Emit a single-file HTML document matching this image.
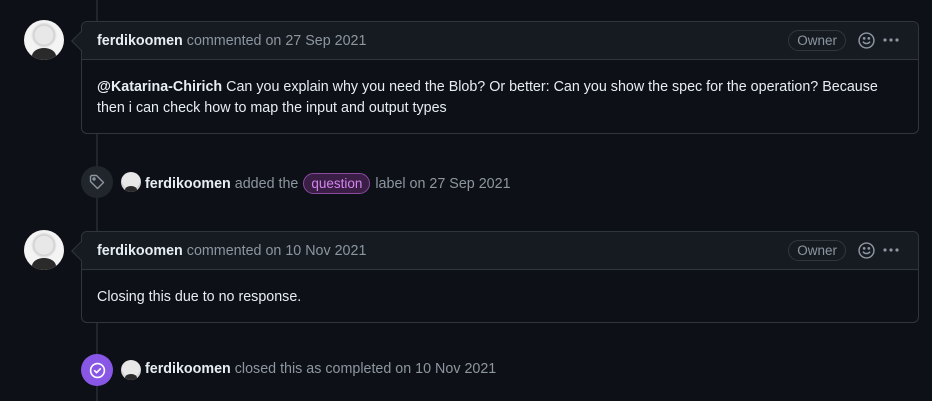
<!DOCTYPE html>
<html><head><style>
*{box-sizing:border-box;margin:0;padding:0}
body{width:932px;height:401px;background:#0d1117;font-family:"Liberation Sans",sans-serif;font-size:14.3px;color:#e6edf3;position:relative;overflow:hidden}
.line{position:absolute;left:96px;top:0;width:2px;height:401px;background:#21262d}
.av{position:absolute;width:40px;height:40px;border-radius:50%;background:radial-gradient(circle at 50% 38%,#e8e8e8 0 9px,#cfcfcf 10px,#f4f4f4 13px);overflow:hidden}
.av::after{content:"";position:absolute;left:8px;top:28px;width:24px;height:16px;border-radius:50% 50% 0 0;background:#2a2a2a}
.av.s{width:20px;height:20px}
.av.s::after{left:4px;top:14px;width:12px;height:8px}
.box{position:absolute;left:81px;width:838px;border:1px solid #30363d;border-radius:6px;background:#0d1117}
.hd{height:38px;background:#161b22;border-bottom:1px solid #30363d;border-radius:6px 6px 0 0;padding:1px 15px 0;display:flex;align-items:center;color:#8d96a0;position:relative}
.hd b{color:#e6edf3;margin-right:4px}
.caret{position:absolute;left:-8px;top:12px;width:14px;height:14px;background:#161b22;border-left:1px solid #30363d;border-bottom:1px solid #30363d;transform:rotate(45deg)}
.own{position:absolute;right:72px;top:8px;height:21px;padding:0 8px;border:1px solid #30363d;border-radius:11px;font-size:13.5px;line-height:19px;color:#8d96a0}
.sm{position:absolute;right:43px;top:10px}
.dots{position:absolute;right:19px;top:16px;width:16px;height:4px}
.bd{padding:17px 15px 15px;line-height:21px}
.ev{position:absolute;left:0;width:932px;height:32px}
.badge{position:absolute;left:81px;top:0;width:32px;height:32px;border-radius:50%;display:flex;align-items:center;justify-content:center}
.evt{position:absolute;left:145px;top:7px;color:#8d96a0;white-space:nowrap}
.evt b{color:#e6edf3}
.lab{display:inline-block;border:1px solid #8a4a9e;background:#3a1e46;color:#d684ef;border-radius:12px;padding:0 7px;font-size:13.5px;line-height:19px;margin:0 1px}
</style></head><body>
<div class="line"></div>

<div class="av" style="left:24px;top:20px"></div>
<div class="box" style="top:21px;height:113px">
 <div class="hd"><div class="caret"></div><b>ferdikoomen</b> commented on 27 Sep 2021
  <span class="own">Owner</span>
  <svg class="sm" width="17" height="17" viewBox="0 0 16 16" fill="none" stroke="#8d96a0" stroke-width="1.4"><circle cx="8" cy="8" r="7"/><path d="M5 9.5c1.5 1.8 4.5 1.8 6 0" stroke-linecap="round"/><circle cx="5.8" cy="6" r=".6" fill="#8d96a0"/><circle cx="10.2" cy="6" r=".6" fill="#8d96a0"/></svg>
  <svg class="dots" viewBox="0 0 16 4" fill="#8d96a0"><circle cx="2" cy="2" r="1.6"/><circle cx="8" cy="2" r="1.6"/><circle cx="14" cy="2" r="1.6"/></svg>
 </div>
 <div class="bd"><b>@Katarina-Chirich</b> Can you explain why you need the Blob? Or better: Can you show the spec for the operation? Because then i can check how to map the input and output types</div>
</div>

<div class="ev" style="top:166px">
 <div class="badge" style="background:#21262d"><svg width="16" height="16" viewBox="0 0 16 16" fill="none" stroke="#8d96a0" stroke-width="1.4"><path d="M1.5 2.5v5l7 7 6-6-7-7h-5z" stroke-linejoin="round"/><circle cx="5" cy="5" r="1"/></svg></div>
 <div class="av s" style="left:121px;top:6px"></div>
 <div class="evt"><b>ferdikoomen</b> added the <span class="lab">question</span> label on 27 Sep 2021</div>
</div>

<div class="av" style="left:24px;top:230px"></div>
<div class="box" style="top:231px;height:92px">
 <div class="hd"><div class="caret"></div><b>ferdikoomen</b> commented on 10 Nov 2021
  <span class="own">Owner</span>
  <svg class="sm" width="17" height="17" viewBox="0 0 16 16" fill="none" stroke="#8d96a0" stroke-width="1.4"><circle cx="8" cy="8" r="7"/><path d="M5 9.5c1.5 1.8 4.5 1.8 6 0" stroke-linecap="round"/><circle cx="5.8" cy="6" r=".6" fill="#8d96a0"/><circle cx="10.2" cy="6" r=".6" fill="#8d96a0"/></svg>
  <svg class="dots" viewBox="0 0 16 4" fill="#8d96a0"><circle cx="2" cy="2" r="1.6"/><circle cx="8" cy="2" r="1.6"/><circle cx="14" cy="2" r="1.6"/></svg>
 </div>
 <div class="bd">Closing this due to no response.</div>
</div>

<div class="ev" style="top:354px">
 <div class="badge" style="background:#8957e5"><svg width="17" height="17" viewBox="0 0 16 16" fill="none" stroke="#fff" stroke-width="1.5"><circle cx="8" cy="8" r="6.5"/><path d="M5.3 8.2l1.8 1.8 3.6-3.6" stroke-linecap="round" stroke-linejoin="round"/></svg></div>
 <div class="av s" style="left:121px;top:6px"></div>
 <div class="evt"><b>ferdikoomen</b> closed this as completed on 10 Nov 2021</div>
</div>
</body></html>
